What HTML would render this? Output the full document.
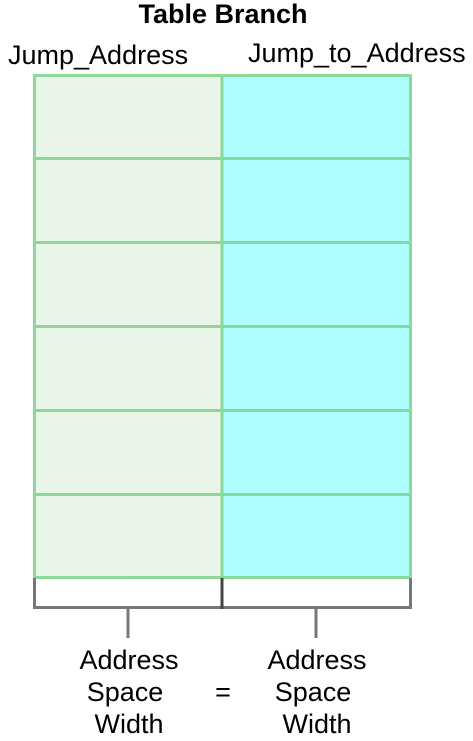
<!DOCTYPE html>
<html><head><meta charset="utf-8"><style>
html,body{margin:0;padding:0;background:#fff;width:473px;height:741px;overflow:hidden}
svg{display:block}
text{font-family:"Liberation Sans",Arial,sans-serif;fill:#000}
</style></head><body>
<svg width="473" height="741" viewBox="0 0 473 741">
<text x="223" y="23" font-size="27" font-weight="bold" text-anchor="middle">Table Branch</text>
<text x="8" y="64" font-size="27">Jump_Address</text>
<text x="248" y="62" font-size="27">Jump_to_Address</text>
<rect x="34" y="75" width="188" height="503" fill="#e8f5e8"/>
<rect x="222" y="75" width="189" height="503" fill="#adffff"/>
<g stroke="#7fd48a" stroke-width="3" fill="none" opacity="0.85">
<rect x="34.5" y="75.5" width="376" height="502"/>
<line x1="222" y1="75" x2="222" y2="578"/>
<line x1="33" y1="158.5" x2="412" y2="158.5"/>
<line x1="33" y1="242.5" x2="412" y2="242.5"/>
<line x1="33" y1="326.5" x2="412" y2="326.5"/>
<line x1="33" y1="410.5" x2="412" y2="410.5"/>
<line x1="33" y1="494.5" x2="412" y2="494.5"/>
</g>
<g stroke="#777" stroke-width="3" fill="none">
<polyline points="34.5,578 34.5,607.5 410.5,607.5 410.5,578"/>
<line x1="128" y1="608" x2="128" y2="638"/>
<line x1="316" y1="608" x2="316" y2="638"/>
</g>
<line x1="222" y1="578" x2="222" y2="609" stroke="#444" stroke-width="3"/>
<g font-size="27" text-anchor="middle">
<text x="129" y="669">Address</text>
<text x="125" y="701">Space</text>
<text x="129" y="733">Width</text>
<text x="317" y="669">Address</text>
<text x="313" y="701">Space</text>
<text x="317" y="733">Width</text>
<text x="223" y="701">=</text>
</g>
</svg>
</body></html>
